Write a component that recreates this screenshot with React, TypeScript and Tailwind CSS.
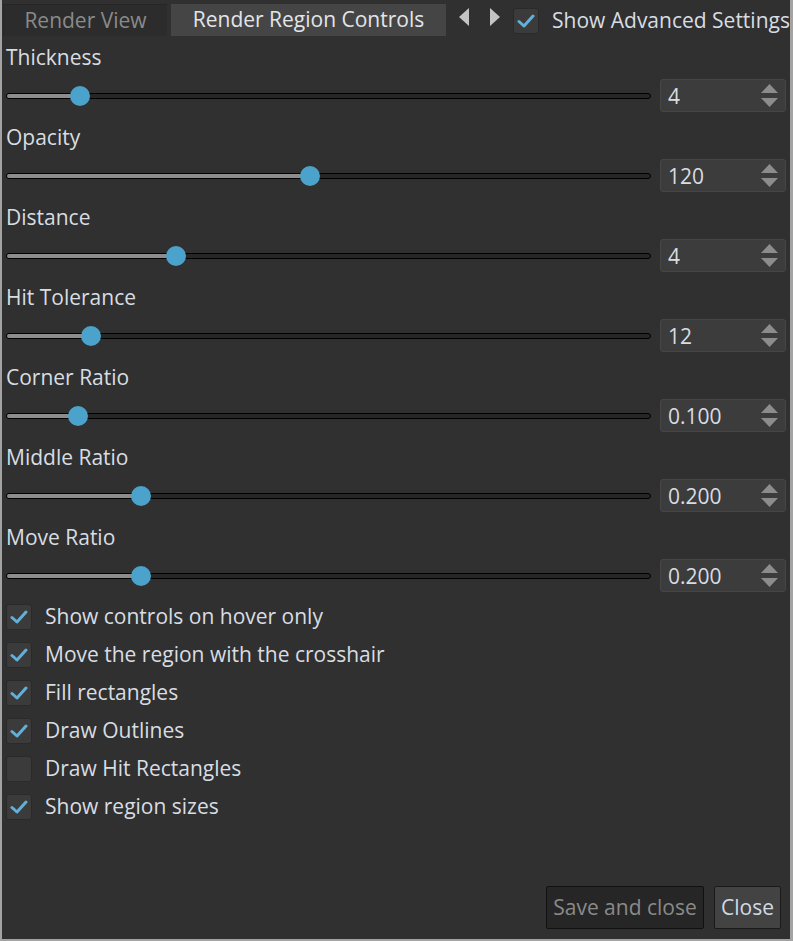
import React from "react";

const FONT = { fontFamily: '"Open Sans", "Noto Sans", sans-serif' };

const sliders = [
  { label: "Thickness", pos: 80, value: "4" },
  { label: "Opacity", pos: 310, value: "120" },
  { label: "Distance", pos: 176, value: "4" },
  { label: "Hit Tolerance", pos: 91, value: "12" },
  { label: "Corner Ratio", pos: 78, value: "0.100" },
  { label: "Middle Ratio", pos: 141, value: "0.200" },
  { label: "Move Ratio", pos: 141, value: "0.200" },
];

const checks = [
  { label: "Show controls on hover only", on: true },
  { label: "Move the region with the crosshair", on: true },
  { label: "Fill rectangles", on: true },
  { label: "Draw Outlines", on: true },
  { label: "Draw Hit Rectangles", on: false },
  { label: "Show region sizes", on: true },
];

function CheckBox({ on }: { on: boolean }) {
  return (
    <div className="w-[26px] h-[26px] shrink-0 rounded-[3px] bg-[#3b3b3b] border border-[#2a2a2a] flex items-center justify-center">
      {on && (
        <svg width="18" height="16" viewBox="0 0 18 16">
          <path d="M2 8.5 L7 13 L16 3" fill="none" stroke="#62b0da" strokeWidth="3" strokeLinecap="round" strokeLinejoin="round" />
        </svg>
      )}
    </div>
  );
}

function Slider({ pos }: { pos: number }) {
  const left = pos - 6;
  return (
    <div className="relative flex-1 h-[22px] flex items-center">
      <div className="relative w-full h-[6px] rounded-full border border-black bg-[#262626] overflow-hidden">
        <div className="absolute left-0 top-0 bottom-0 bg-[#8c8c8c]" style={{ width: left }} />
      </div>
      <div
        className="absolute top-[1px] w-[20px] h-[20px] rounded-full bg-[#4ba2ca]"
        style={{ left: left - 10 }}
      />
    </div>
  );
}

function SpinBox({ value }: { value: string }) {
  return (
    <div className="w-[126px] h-[33px] shrink-0 rounded-[3px] bg-[#3c3c3c] border border-[#464646] flex items-center justify-between pl-[7px] pr-[7px]">
      <span className="text-[21px] leading-none text-[#d8dde2] pt-[2px]">{value}</span>
      <div className="flex flex-col gap-[5px]">
        <svg width="17" height="9" viewBox="0 0 17 9"><path d="M8.5 0 L17 9 L0 9 Z" fill="#8c8c8c" /></svg>
        <svg width="17" height="9" viewBox="0 0 17 9"><path d="M0 0 L17 0 L8.5 9 Z" fill="#8c8c8c" /></svg>
      </div>
    </div>
  );
}

export default function App() {
  return (
    <div
      className="w-[793px] h-[941px] bg-[#303030] border-l-2 border-r-[3px] border-b-2 border-[#a3a3a3] flex flex-col overflow-hidden text-[#d8dde2]"
      style={FONT}
    >
      {/* Tab bar */}
      <div className="flex items-end h-[36px] shrink-0 pl-[1px] whitespace-nowrap">
        <div className="h-[32px] w-[164px] bg-[#2c2c2c] border-t border-l border-[#262626] flex items-center justify-center text-[21px] text-[#8a8a8a]">
          Render View
        </div>
        <div className="ml-[4px] h-[32px] w-[275px] bg-[#454545] flex items-center justify-center text-[21px] text-[#e2e5e8]">
          Render Region Controls
        </div>
        <div className="h-[32px] flex items-center ml-[13px] gap-[21px] pb-[7px]">
          <svg width="10" height="18" viewBox="0 0 10 18"><path d="M10 0 L10 18 L0 9 Z" fill="#c4c4c4" /></svg>
          <svg width="10" height="18" viewBox="0 0 10 18"><path d="M0 0 L10 9 L0 18 Z" fill="#c4c4c4" /></svg>
        </div>
        <div className="h-[32px] flex items-center ml-[13px] pt-[1px]">
          <CheckBox on />
          <span className="ml-[13px] text-[21px]">Show Advanced Settings</span>
        </div>
      </div>

      {/* Sliders */}
      <div className="flex flex-col pl-[4px] pr-[4px] mt-[8px]">
        {sliders.map((s) => (
          <div key={s.label} className="flex flex-col h-[80px]">
            <div className="h-[26px] leading-[26px] text-[21px]">{s.label}</div>
            <div className="flex items-center gap-[9px] mt-[9px]">
              <Slider pos={s.pos} />
              <SpinBox value={s.value} />
            </div>
          </div>
        ))}
      </div>

      {/* Checkboxes */}
      <div className="flex flex-col pl-[4px] -mt-[6px]">
        {checks.map((c) => (
          <div key={c.label} className="h-[38px] flex items-center">
            <CheckBox on={c.on} />
            <span className="ml-[13px] text-[21px]">{c.label}</span>
          </div>
        ))}
      </div>

      {/* Buttons */}
      <div className="mt-auto flex justify-end gap-[10px] pr-[9px] pb-[10px]">
        <button className="h-[43px] w-[158px] bg-[#262626] border border-[#111] rounded-[2px] text-[21px] text-[#8a8a8a] pt-[1px]">
          Save and close
        </button>
        <button className="h-[43px] w-[67px] bg-[#434343] border border-[#1a1a1a] rounded-[2px] text-[21px] text-[#d0dae4] pt-[1px]">
          Close
        </button>
      </div>
    </div>
  );
}
